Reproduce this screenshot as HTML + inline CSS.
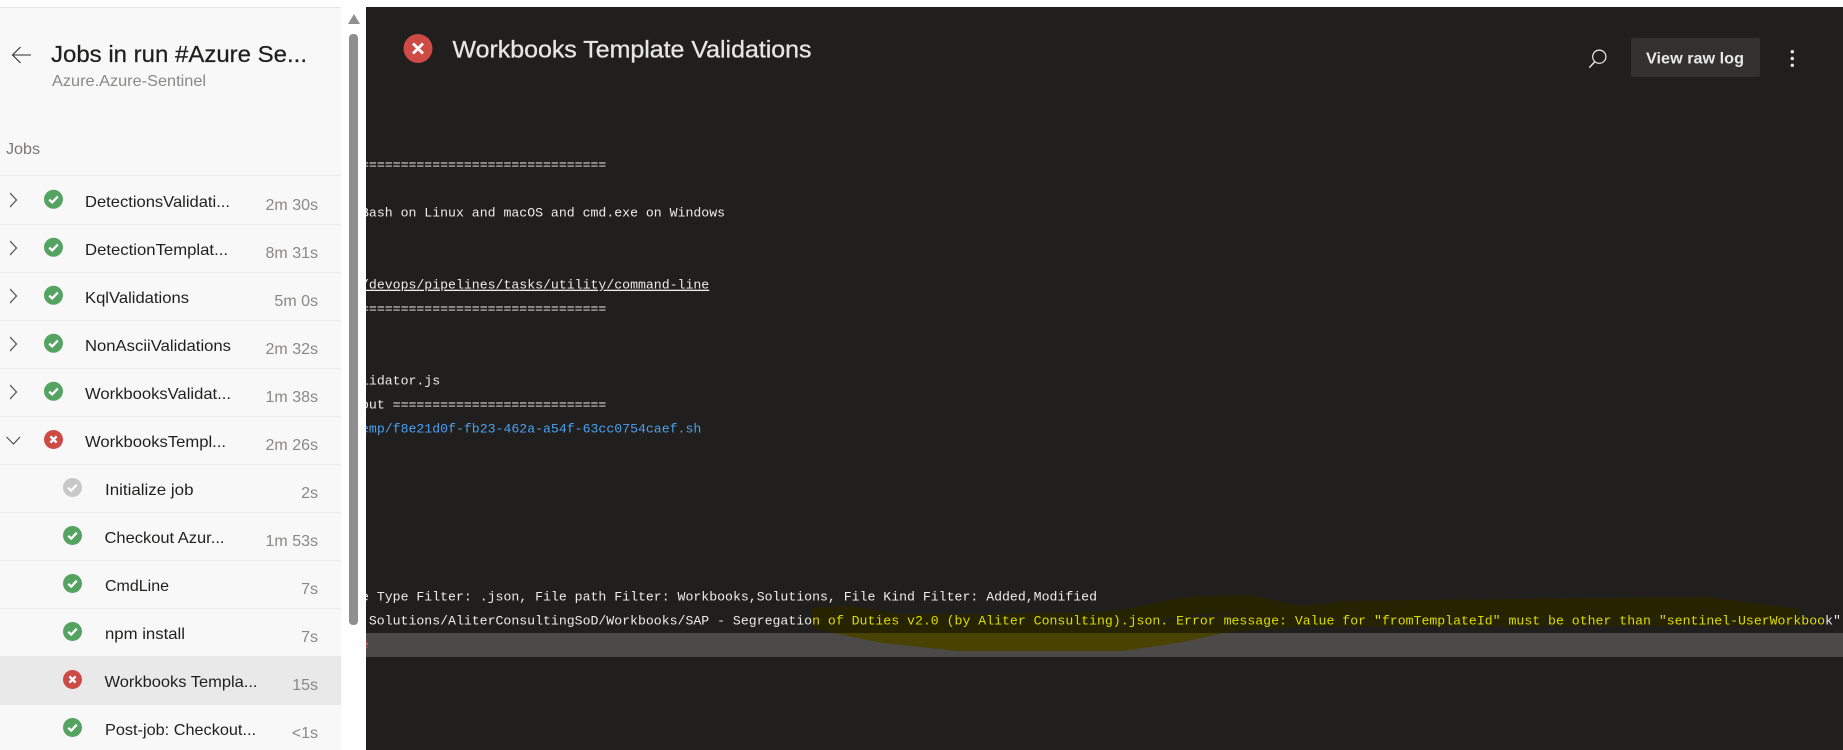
<!DOCTYPE html>
<html>
<head>
<meta charset="utf-8">
<title>Workbooks Template Validations</title>
<style>
html,body{margin:0;padding:0;background:#fff;width:1843px;height:750px;overflow:hidden}
svg{display:block}
.t{font-family:"Liberation Sans",sans-serif}
.n{font-family:"Liberation Sans",sans-serif;font-size:16px;fill:#201f1e}
.d{font-family:"Liberation Sans",sans-serif;font-size:16px;fill:#8a8886;text-anchor:end}
.m{font-family:"Liberation Mono",monospace;font-size:13.2px;fill:#ececec;stroke:currentColor;stroke-width:0}
</style>
</head>
<body>
<svg width="1843" height="750" viewBox="0 0 1843 750" xmlns="http://www.w3.org/2000/svg">
<defs>
<g id="ok"><circle r="9.5" fill="#55a362"/><path d="M-4.3 0.3L-1.3 3.1L4.3-2.8" fill="none" stroke="#fff" stroke-width="2.3"/></g>
<g id="gr"><circle r="9.5" fill="#c8c8c8"/><path d="M-4.3 0.3L-1.3 3.1L4.3-2.8" fill="none" stroke="#fff" stroke-width="2.3"/></g>
<g id="er"><circle r="9.5" fill="#cd4a45"/><path d="M-3.1-3.1L3.1 3.1M3.1-3.1L-3.1 3.1" fill="none" stroke="#fff" stroke-width="2.4"/></g>
<path id="ch" d="M10 193L16.5 200L10 207" fill="none" stroke="#444" stroke-width="1.1"/>
<clipPath id="log"><rect x="366" y="7" width="1477" height="743"/></clipPath>
<clipPath id="hl"><polygon points="812,608 850,606 900,614 1000,614 1100,612 1133,608 1167,600 1200,596 1250,595 1300,606 1343,601 1583,598 1707,597 1800,609 1800,626 1300,627 1250,630 1223,633 1183,642 1123,651 957,651 883,643 833,633 813,628"/></clipPath>
</defs>

<rect width="1843" height="750" fill="#fff"/>

<!-- sidebar -->
<rect x="0" y="7" width="341" height="743" fill="#f8f8f8"/>
<rect x="0" y="7" width="341" height="1" fill="#e4e4e4"/>
<rect x="341" y="8" width="25" height="742" fill="#fff"/>
<path d="M348 24L354 14L360 24Z" fill="#8f8f8f"/>
<rect x="349" y="34" width="9" height="591" rx="4" fill="#8f8f8f"/>

<path d="M31 55H13M20.5 47L12.5 55L20.5 63" fill="none" stroke="#323130" stroke-width="1.1"/>
<text class="t" x="51" y="62" font-size="23" fill="#201f1e" stroke="#201f1e" stroke-width="0.25" textLength="256" lengthAdjust="spacingAndGlyphs">Jobs in run #Azure Se...</text>
<text class="t" x="52" y="86" font-size="16" fill="#8a8886" textLength="154" lengthAdjust="spacingAndGlyphs">Azure.Azure-Sentinel</text>
<text class="t" x="6" y="154" font-size="16" fill="#7a7775" textLength="34" lengthAdjust="spacingAndGlyphs">Jobs</text>

<rect x="0" y="656" width="341" height="49" fill="#e9e9e9"/>
<g fill="#ebebeb">
<rect x="0" y="175" width="341" height="1"/>
<rect x="0" y="224" width="341" height="1"/>
<rect x="0" y="272" width="341" height="1"/>
<rect x="0" y="320" width="341" height="1"/>
<rect x="0" y="368" width="341" height="1"/>
<rect x="0" y="416" width="341" height="1"/>
<rect x="0" y="464" width="341" height="1"/>
<rect x="0" y="512" width="341" height="1"/>
<rect x="0" y="560" width="341" height="1"/>
<rect x="0" y="608" width="341" height="1"/>
</g>

<use href="#ch"/>
<use href="#ch" y="48"/>
<use href="#ch" y="96"/>
<use href="#ch" y="144"/>
<use href="#ch" y="192"/>
<path d="M6.5 437L13.5 444L20 437" fill="none" stroke="#444" stroke-width="1.1"/>

<use href="#ok" x="53.5" y="199.3"/>
<use href="#ok" x="53.5" y="247.3"/>
<use href="#ok" x="53.5" y="295.3"/>
<use href="#ok" x="53.5" y="343.3"/>
<use href="#ok" x="53.5" y="391.3"/>
<use href="#er" x="53.5" y="439.5"/>
<use href="#gr" x="72.5" y="487.5"/>
<use href="#ok" x="72.5" y="535.5"/>
<use href="#ok" x="72.5" y="583.5"/>
<use href="#ok" x="72.5" y="631.5"/>
<use href="#er" x="72.5" y="679.5"/>
<use href="#ok" x="72.5" y="727.5"/>

<text class="n" x="85" y="207" textLength="145" lengthAdjust="spacingAndGlyphs">DetectionsValidati...</text>
<text class="n" x="85" y="255" textLength="143" lengthAdjust="spacingAndGlyphs">DetectionTemplat...</text>
<text class="n" x="85" y="303" textLength="104" lengthAdjust="spacingAndGlyphs">KqlValidations</text>
<text class="n" x="85" y="351" textLength="146" lengthAdjust="spacingAndGlyphs">NonAsciiValidations</text>
<text class="n" x="85" y="399" textLength="146" lengthAdjust="spacingAndGlyphs">WorkbooksValidat...</text>
<text class="n" x="85" y="447" textLength="141" lengthAdjust="spacingAndGlyphs">WorkbooksTempl...</text>
<text class="n" x="105" y="495" textLength="88.5" lengthAdjust="spacingAndGlyphs">Initialize job</text>
<text class="n" x="104.5" y="543" textLength="120" lengthAdjust="spacingAndGlyphs">Checkout Azur...</text>
<text class="n" x="105" y="591" textLength="64" lengthAdjust="spacingAndGlyphs">CmdLine</text>
<text class="n" x="105" y="639" textLength="80" lengthAdjust="spacingAndGlyphs">npm install</text>
<text class="n" x="104.5" y="687" textLength="153" lengthAdjust="spacingAndGlyphs">Workbooks Templa...</text>
<text class="n" x="105" y="735" textLength="151" lengthAdjust="spacingAndGlyphs">Post-job: Checkout...</text>

<text class="d" x="318" y="210">2m 30s</text>
<text class="d" x="318" y="258">8m 31s</text>
<text class="d" x="318" y="306">5m 0s</text>
<text class="d" x="318" y="354">2m 32s</text>
<text class="d" x="318" y="402">1m 38s</text>
<text class="d" x="318" y="450">2m 26s</text>
<text class="d" x="318" y="498">2s</text>
<text class="d" x="318" y="546">1m 53s</text>
<text class="d" x="318" y="594">7s</text>
<text class="d" x="318" y="642">7s</text>
<text class="d" x="318" y="690">15s</text>
<text class="d" x="318" y="738">&lt;1s</text>

<!-- log panel -->
<rect x="366" y="7" width="1477" height="743" fill="#201f1e"/>

<circle cx="418" cy="48.5" r="14.5" fill="#cd4a45"/>
<path d="M413 43.5L423 53.5M423 43.5L413 53.5" fill="none" stroke="#fff" stroke-width="2.8"/>
<text class="t" x="452.5" y="57.5" font-size="24" fill="#e6e6e6" stroke="#e6e6e6" stroke-width="0.3" textLength="359" lengthAdjust="spacingAndGlyphs">Workbooks Template Validations</text>

<circle cx="1599.3" cy="56.7" r="6.6" fill="none" stroke="#eee" stroke-width="1.2"/>
<path d="M1595 61.5L1589.3 67.7" fill="none" stroke="#eee" stroke-width="1.4"/>
<rect x="1631" y="38" width="129" height="39" rx="2" fill="#323130"/>
<text class="t" x="1646" y="63.5" font-size="16" font-weight="bold" fill="#e8e8e8" textLength="98" lengthAdjust="spacingAndGlyphs">View raw log</text>
<circle cx="1792.3" cy="51.7" r="1.7" fill="#e8e8e8"/>
<circle cx="1792.3" cy="58.5" r="1.7" fill="#e8e8e8"/>
<circle cx="1792.3" cy="65.3" r="1.7" fill="#e8e8e8"/>

<!-- highlight scribble -->
<rect x="800" y="590" width="1010" height="70" fill="#262300" clip-path="url(#hl)"/>
<path d="M1137 629L1183 618L1247 613L1200 614L1153 622Z" fill="#201f1e"/>
<rect x="366" y="633" width="1477" height="24" fill="#4b4a49"/>
<rect x="800" y="633" width="1010" height="24" fill="#4a4200" clip-path="url(#hl)"/>

<g clip-path="url(#log)">
<text class="m" x="361" y="168.7">===============================</text>
<text class="m" x="361" y="216.7">Bash on Linux and macOS and cmd.exe on Windows</text>
<text class="m" x="361" y="288.7" text-decoration="underline">/devops/pipelines/tasks/utility/command-line</text>
<text class="m" x="361" y="312.7">===============================</text>
<text class="m" x="361" y="384.7">lidator.js</text>
<text class="m" x="361" y="408.7">out ===========================</text>
<text class="m" x="361" y="432.7" style="fill:#4aa0f0">emp/f8e21d0f-fb23-462a-a54f-63cc0754caef.sh</text>
<text class="m" x="361" y="600.7">e Type Filter: .json, File path Filter: Workbooks,Solutions, File Kind Filter: Added,Modified</text>
<text class="m" x="368.9" y="624.7">Solutions/AliterConsultingSoD/Workbooks/SAP - Segregatio<tspan style="fill:#dcdc00">n of Duties v2.0 (by Aliter Consulting).json. Error message: Value for "fromTemplateId" must be other than "sentinel-UserWorkboo</tspan>k"</text>
<text class="m" x="361" y="648.7" style="fill:#f14c4c">e</text>
</g>
</svg>
</body>
</html>
